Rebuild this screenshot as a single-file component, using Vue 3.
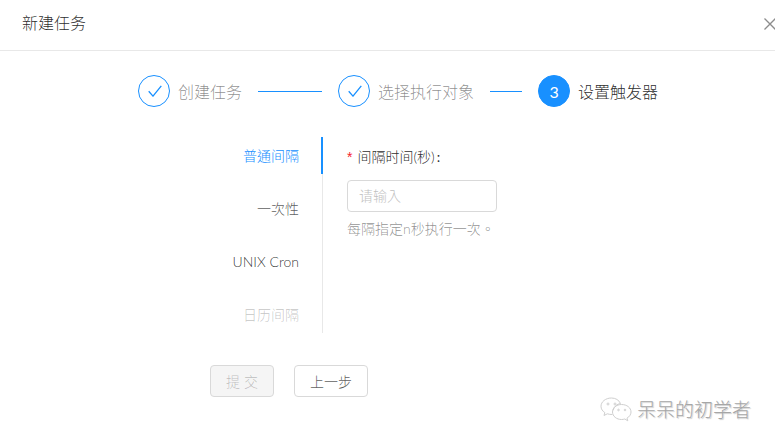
<script setup>
const steps = [
  { label: '创建任务', line: 64, done: true },
  { label: '选择执行对象', line: 32, done: true },
  { label: '设置触发器', line: 0, done: false, num: 3 }
]
const tabs = [
  { label: '普通间隔', cls: 'active' },
  { label: '一次性', cls: '' },
  { label: 'UNIX Cron', cls: 'latin' },
  { label: '日历间隔', cls: 'disabled' }
]
</script>

<template>
  <div class="page">
    <header class="head">
      <span class="title">新建任务</span>
      <svg class="close" width="12" height="12" viewBox="0 0 12 12"><path d="M.5.5l11 11M11.500.5l-11 11" stroke="#8c8c8c" stroke-width="1.3" fill="none"/></svg>
    </header>

    <div class="steps">
      <div v-for="s in steps" :key="s.label" class="step">
        <span class="dot" :class="{ on: !s.done }">
          <svg v-if="s.done" class="check" width="14" height="12" viewBox="0 0 14 12"><path d="M.7 6.300l4.300 4.800L13.300.8" stroke="#1890ff" stroke-width="1.3" fill="none"/></svg>
          <template v-else>{{ s.num }}</template>
        </span>
        <span class="step-label" :class="{ current: !s.done }">{{ s.label }}</span>
        <span v-if="s.line" class="step-line" :style="{ width: s.line + 'px' }"></span>
      </div>
    </div>

    <div class="main">
      <nav class="tabs">
        <div v-for="t in tabs" :key="t.label" class="tab" :class="t.cls">{{ t.label }}</div>
      </nav>
      <form class="form">
        <div class="label"><span class="req">*</span>间隔时间(秒)<span class="colon">:</span></div>
        <div class="input">请输入</div>
        <div class="hint">每隔指定n秒执行一次。</div>
      </form>
    </div>

    <div class="actions">
      <button type="button" class="btn submit">提 交</button>
      <button type="button" class="btn">上一步</button>
    </div>

    <div class="mark">
      <svg width="34" height="26" viewBox="0 0 34 26" fill="none" stroke="#cfcfcf" stroke-width="1">
        <path d="M13 13.500c1-4 4-6.500 7.500-7C19 3 15.500 1 11.500 1 5.500 1 1 4.800 1 9.300c0 2.600 1.500 4.800 3.800 6.300L4 18.500l3.300-1.700c1.500.5 3 .7 5 .7"/>
        <path d="M21.500 7.500c-5 0-9 3.300-9 7.500s4 7.500 9 7.500c1.200 0 2.300-.2 3.300-.5l3 1.800-.8-2.700c2.500-1.400 4-3.700 4-6.100 0-4.200-4-7.500-9.500-7.500z"/>
        <circle cx="8" cy="7" r="1"/><circle cx="15" cy="7" r="1"/><circle cx="18.500" cy="13" r=".8"/><circle cx="25" cy="13" r=".8"/>
      </svg>
      <span class="mark-text">呆呆的初学者</span>
    </div>
  </div>
</template>

<style scoped>
.page {
  position: relative;
  width: 775px;
  height: 444px;
  overflow: hidden;
  background: #fff;
  font-family: Lato, "Noto Sans CJK TC", sans-serif;
  font-weight: 300;
  font-size: 14px;
  color: rgba(0, 0, 0, 0.65);
}
.head {
  height: 46px;
  padding: 0 0 4px 22px;
  box-sizing: content-box;
  border-bottom: 1px solid #e8e8e8;
  display: flex;
  align-items: center;
  justify-content: space-between;
  margin-right: -1px;
}
.title {
  font-size: 16px;
  line-height: 46px;
  color: rgba(0, 0, 0, 0.85);
}
.close { margin-top: 2px; }
.steps {
  display: flex;
  padding: 24px 0 0 138px;
  height: 32px;
}
.step {
  display: flex;
  align-items: center;
  height: 32px;
  margin-right: 16px;
}
.dot {
  width: 32px;
  height: 32px;
  box-sizing: border-box;
  border: 1px solid #1890ff;
  border-radius: 50%;
  display: flex;
  align-items: center;
  justify-content: center;
  font-size: 16px;
  font-weight: 400;
  color: #fff;
}
.dot.on { background: #1890ff; }
.check { margin-left: 1px; }
.step-label {
  margin: 0 0 1px 8px;
  font-size: 16px;
  color: rgba(0, 0, 0, 0.45);
}
.step-label.current { color: rgba(0, 0, 0, 0.85); }
.step-line {
  margin-left: 16px;
  height: 1px;
  background: #1890ff;
}
.main {
  display: flex;
  margin-top: 30px;
  height: 196px;
}
.tabs {
  width: 323px;
  box-sizing: border-box;
  border-right: 1px solid #e8e8e8;
}
.tab {
  position: relative;
  height: 37px;
  line-height: 37px;
  margin-bottom: 16px;
  padding-right: 23px;
  text-align: right;
}
.tab.latin { color: rgba(0, 0, 0, 0.8); }
.tab.active { color: #1890ff; }
.tab.active::after {
  content: "";
  position: absolute;
  right: -1px;
  top: 0;
  bottom: 0;
  width: 2px;
  background: #1890ff;
}
.tab.disabled { color: rgba(0, 0, 0, 0.25); }
.form {
  padding-left: 24px;
}
.label {
  height: 40px;
  line-height: 40px;
  color: rgba(0, 0, 0, 0.85);
}
.colon {
  margin-left: 2px;
  font-weight: 400;
}
.req {
  color: #f5222d;
  margin-right: 5px;
  font-family: "Liberation Sans", sans-serif;
}
.input {
  width: 150px;
  height: 32px;
  margin-top: 3px;
  box-sizing: border-box;
  border: 1px solid #d9d9d9;
  border-radius: 4px;
  padding-left: 11px;
  line-height: 30px;
  color: #bfbfbf;
}
.hint {
  margin-top: 6px;
  line-height: 22px;
  color: rgba(0, 0, 0, 0.45);
}
.actions {
  display: flex;
  gap: 20px;
  padding: 32px 0 0 210px;
}
.btn {
  height: 32px;
  width: 74px;
  padding: 0;
  background: #fff;
  border: 1px solid #d9d9d9;
  border-radius: 4px;
  font: inherit;
  color: rgba(0, 0, 0, 0.65);
}
.btn.submit {
  width: 64px;
  background: #f5f5f5;
  color: rgba(0, 0, 0, 0.25);
}
.mark {
  position: absolute;
  left: 600px;
  top: 397px;
  display: flex;
  align-items: center;
  gap: 3px;
}
.mark-text {
  font-size: 19px;
  line-height: 26px;
  color: #a6a6a6;
  text-shadow: 1px 1px 1px #ccc;
}
</style>
